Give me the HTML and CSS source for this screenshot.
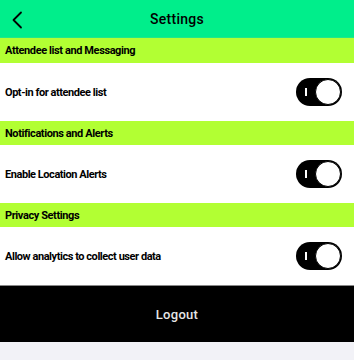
FILE: index.html
```html
<!DOCTYPE html>
<html>
<head>
<meta charset="utf-8">
<link rel="stylesheet" href="styles.css">
</head>
<body>
<div class="page">
  <header class="topbar">
    <svg class="back" width="12" height="18" viewBox="0 0 12 18"><path d="M10 1.5 L2.5 9 L10 16.5" fill="none" stroke="#000" stroke-width="1.8" stroke-linecap="round" stroke-linejoin="round"/></svg>
    <div class="title">Settings</div>
  </header>
  <div class="section">Attendee list and Messaging</div>
  <div class="row"><span class="label">Opt-in for attendee list</span><span class="toggle"><span class="on-mark"></span><span class="knob"></span></span></div>
  <div class="section">Notifications and Alerts</div>
  <div class="row"><span class="label">Enable Location Alerts</span><span class="toggle"><span class="on-mark"></span><span class="knob"></span></span></div>
  <div class="section">Privacy Settings</div>
  <div class="row"><span class="label">Allow analytics to collect user data</span><span class="toggle"><span class="on-mark"></span><span class="knob"></span></span></div>
  <div class="logout">Logout</div>
  <div class="rest"></div>
</div>
</body>
</html>
```
FILE: styles.css
```css
html, body { margin: 0; padding: 0; }
body { background: #f2f2f7; font-family: Roboto, "Liberation Sans", sans-serif; color: #000; }
.page { width: 354px; height: 360px; display: flex; flex-direction: column; }
.topbar { height: 38px; background: #00ee8b; display: flex; align-items: center; justify-content: center; position: relative; box-sizing: border-box; border-bottom: 1px solid #22e68a; }
.back { position: absolute; left: 11px; top: 11px; }
.title { font-size: 14px; font-weight: 500; letter-spacing: 0.3px; }
.section { height: 25px; background: #b2ff33; display: flex; align-items: center; padding-left: 5px; font-size: 11px; font-weight: 700; letter-spacing: -0.4px; }
.section + .row + .section { height: 24px; }
.row { height: 58px; background: #fff; display: flex; align-items: center; justify-content: space-between; padding: 0 12px 0 5px; }
.label { font-size: 11px; font-weight: 700; letter-spacing: -0.45px; }
.toggle { width: 46px; height: 28px; border-radius: 14px; background: #000; position: relative; display: flex; align-items: center; justify-content: flex-end; padding-right: 1px; box-sizing: border-box; }
.knob { width: 24px; height: 24px; border-radius: 50%; background: #fff; border: 1px solid #000; }
.on-mark { position: absolute; left: 9px; top: 10px; width: 2px; height: 8px; background: #fff; }
.logout { height: 57px; background: #000; color: #e6e6e6; display: flex; align-items: center; justify-content: center; font-size: 13px; font-weight: 500; letter-spacing: 0.3px; border-top: 1px solid #888; box-sizing: border-box; }
.rest { flex: 1; background: #f2f2f7; }
```
